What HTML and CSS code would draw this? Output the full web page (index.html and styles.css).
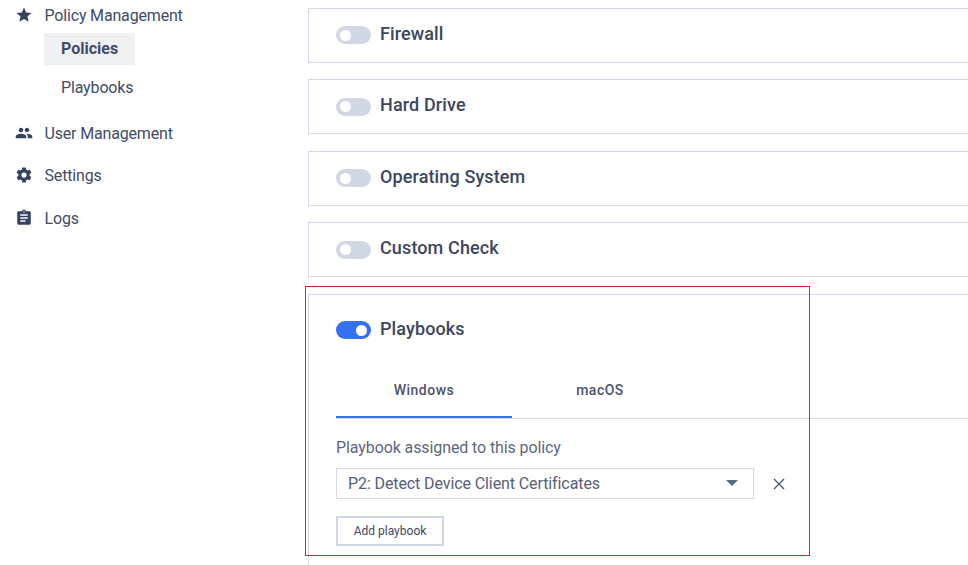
FILE: index.html
```html
<!DOCTYPE html>
<html lang="en">
<head>
<meta charset="utf-8">
<title>Policies</title>
<link rel="stylesheet" href="styles.css">
</head>
<body>
<div class="page">
  <nav class="sidebar">
    <div class="nav-item nav-first">
      <svg class="nav-icon" viewBox="0 0 24 24"><path d="M12 17.27 18.18 21l-1.64-7.03L22 9.24l-7.19-.61L12 2 9.19 8.63 2 9.24l5.46 4.73L5.82 21z"/></svg>
      <span>Policy Management</span>
    </div>
    <div class="sub-item sub-active">Policies</div>
    <div class="sub-item">Playbooks</div>
    <div class="nav-item nav-users">
      <svg class="nav-icon" viewBox="0 0 24 24"><path d="M16 11c1.66 0 2.99-1.34 2.99-3S17.66 5 16 5s-3 1.34-3 3 1.34 3 3 3zm-8 0c1.66 0 2.99-1.34 2.99-3S9.66 5 8 5 5 6.34 5 8s1.34 3 3 3zm0 2c-2.33 0-7 1.17-7 3.5V19h14v-2.5C15 14.17 10.33 13 8 13zm8 0c-.29 0-.62.02-.97.05 1.16.84 1.97 1.97 1.97 3.45V19h6v-2.5c0-2.33-4.67-3.5-7-3.5z"/></svg>
      <span>User Management</span>
    </div>
    <div class="nav-item nav-settings">
      <svg class="nav-icon" viewBox="0 0 24 24"><path fill-rule="evenodd" d="M19.43 12.98c.04-.32.07-.64.07-.98s-.03-.66-.07-.98l2.11-1.65c.19-.15.24-.42.12-.64l-2-3.46c-.12-.22-.39-.3-.61-.22l-2.49 1c-.52-.4-1.08-.73-1.69-.98l-.38-2.65A.49.49 0 0 0 14 2h-4c-.25 0-.46.18-.49.42l-.38 2.65c-.61.25-1.17.59-1.69.98l-2.49-1c-.23-.09-.49 0-.61.22l-2 3.46c-.13.22-.07.49.12.64l2.11 1.65c-.04.32-.07.65-.07.98s.03.66.07.98l-2.11 1.65c-.19.15-.24.42-.12.64l2 3.46c.12.22.39.3.61.22l2.49-1c.52.4 1.08.73 1.69.98l.38 2.65c.03.24.24.42.49.42h4c.25 0 .46-.18.49-.42l.38-2.65c.61-.25 1.17-.59 1.69-.98l2.49 1c.23.09.49 0 .61-.22l2-3.46c.12-.22.07-.49-.12-.64l-2.11-1.65zM12 15.5a3.5 3.5 0 1 1 0-7 3.5 3.5 0 0 1 0 7z"/></svg>
      <span>Settings</span>
    </div>
    <div class="nav-item nav-logs">
      <svg class="nav-icon" viewBox="0 0 24 24"><path fill-rule="evenodd" d="M19 3h-4.18C14.4 1.84 13.3 1 12 1s-2.4.84-2.82 2H5c-1.1 0-2 .9-2 2v14c0 1.1.9 2 2 2h14c1.1 0 2-.9 2-2V5c0-1.1-.9-2-2-2zm-7 0c.55 0 1 .45 1 1s-.45 1-1 1-1-.45-1-1 .45-1 1-1zm2 14H7v-2h7v2zm3-4H7v-2h10v2zm0-4H7V7h10v2z"/></svg>
      <span>Logs</span>
    </div>
  </nav>
  <main class="content">
    <section class="card">
      <div class="card-head"><span class="toggle"></span><h2>Firewall</h2></div>
    </section>
    <section class="card">
      <div class="card-head"><span class="toggle"></span><h2>Hard Drive</h2></div>
    </section>
    <section class="card">
      <div class="card-head"><span class="toggle"></span><h2>Operating System</h2></div>
    </section>
    <section class="card">
      <div class="card-head"><span class="toggle"></span><h2>Custom Check</h2></div>
    </section>
    <section class="card card-open">
      <div class="card-head"><span class="toggle toggle-on"></span><h2>Playbooks</h2></div>
      <div class="tabs">
        <div class="tab tab-active">Windows</div>
        <div class="tab">macOS</div>
      </div>
      <div class="field-label">Playbook assigned to this policy</div>
      <div class="field-row">
        <div class="select">
          <span>P2: Detect Device Client Certificates</span>
          <svg class="caret" viewBox="0 0 12 6"><path d="M0 0h12L6 6z"/></svg>
        </div>
        <svg class="remove" viewBox="0 0 12 12"><path d="M1 1l10 10M11 1 1 11"/></svg>
      </div>
      <button class="add-btn" type="button">Add playbook</button>
    </section>
  </main>
</div>
<div class="highlight"></div>
</body>
</html>
```
FILE: styles.css
```css
* { box-sizing: border-box; }
html, body { margin: 0; height: 100%; overflow: hidden; background: #fff; }
body { font-family: Roboto, "Liberation Sans", sans-serif; color: #3b4660; position: relative; }
.page { display: flex; height: 565px; overflow: hidden; }
.sidebar { width: 308px; flex: none; padding-left: 16px; }
.nav-item { display: flex; align-items: center; height: 22px; font-size: 16px; letter-spacing: -0.17px; color: #414c66; }
.nav-item span { margin-left: 12px; }
.nav-icon { width: 18px; height: 18px; fill: #34435e; flex: none; margin: 0 -0.5px 0 -1px; }
.nav-first { margin-top: 4px; }
.sub-item { width: 91px; height: 32px; margin: 0 0 0 28px; padding-left: 17px; font-size: 16px; line-height: 32px; letter-spacing: -0.15px; color: #414c66; }
.sub-active { margin-top: 7px; background: #eff0f2; font-weight: 700; letter-spacing: 0; }
.sub-item + .sub-item { margin-top: 7px; }
.nav-users { margin-top: 18px; }
.nav-settings { margin-top: 20px; }
.nav-logs { margin-top: 21px; }
.content { width: 720px; flex: none; padding-top: 7.75px; display: flex; flex-direction: column; gap: 16.5px; }
.card { border: 1px solid #d2d8e6; height: 55px; flex: none; padding: 0 27px; }
.card-open { height: 400px; }
.card-head { display: flex; align-items: center; height: 50px; }
.card-open .card-head { height: 68px; }
.card-head h2 { margin: -1px 0 0 9px; font-size: 18px; font-weight: 500; letter-spacing: 0.12px; color: #3b4660; }
.toggle { width: 35px; height: 18px; border-radius: 9px; background: #d0d7e5; display: flex; align-items: center; padding: 0 4px; margin-top: 3px; }
.toggle::after { content: ""; width: 11px; height: 11px; border-radius: 50%; background: #fff; }
.toggle-on { background: #3371f2; justify-content: flex-end; }
.tabs { display: flex; border-bottom: 1px solid #d2d8e6; margin-right: -27px; height: 56px; }
.tab { width: 176px; height: 55px; display: flex; align-items: center; justify-content: center; font-size: 14px; font-weight: 500; letter-spacing: 0.5px; color: #4a546c; }
.tab-active { border-bottom: 2px solid #3371f2; padding-top: 2px; }
.field-label { margin-top: 19px; font-size: 16px; line-height: 20px; letter-spacing: -0.1px; color: #5d677d; }
.field-row { display: flex; align-items: center; margin-top: 10px; }
.select { width: 418px; height: 31px; border: 1px solid #d9dadd; padding: 0 15px 0 11px; display: flex; align-items: center; justify-content: space-between; font-size: 16px; letter-spacing: -0.1px; color: #556079; }
.caret { width: 12px; height: 6px; fill: #556b8a; }
.remove { width: 12px; height: 12px; margin: 2px 0 0 19px; fill: none; stroke: #4e5c75; stroke-width: 1.4; }
.add-btn { display: block; margin-top: 17px; width: 108px; height: 30px; padding: 0; background: #fff; border: 2px solid #d0d7e5; font: 400 12px Roboto, "Liberation Sans", sans-serif; letter-spacing: 0; color: #3f4a63; }
.highlight { position: absolute; left: 305px; top: 286px; width: 505px; height: 270px; border: 1px solid #e0202c; pointer-events: none; }
```
